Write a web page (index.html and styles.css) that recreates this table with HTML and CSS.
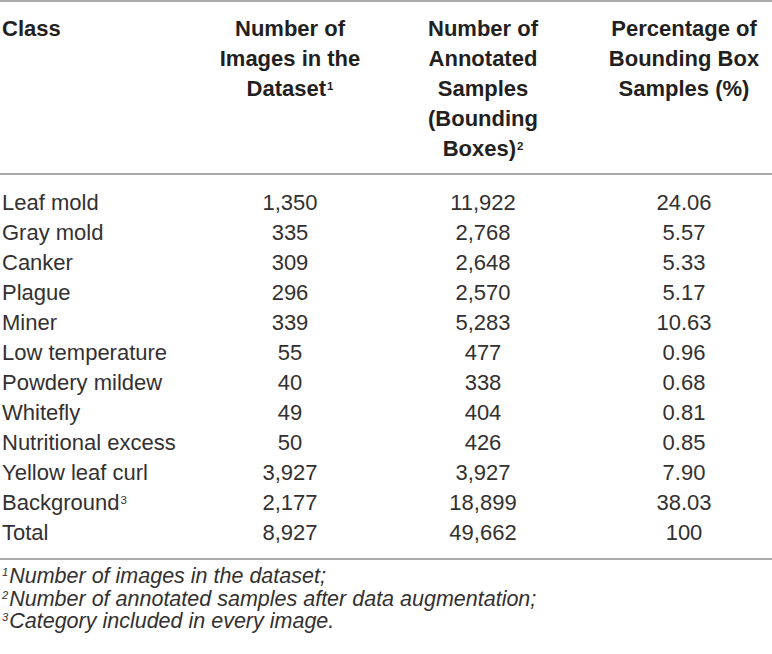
FILE: index.html
```html
<!DOCTYPE html>
<html lang="en">
<head>
<meta charset="utf-8">
<title>Dataset classes</title>
<link rel="stylesheet" href="styles.css">
</head>
<body>
<div class="wrap">
<table class="data">
  <colgroup>
    <col class="c1"><col class="c2"><col class="c3"><col class="c4">
  </colgroup>
  <thead>
    <tr>
      <th class="left">Class</th>
      <th><span class="ln">Number of</span><span class="ln">Images in the</span><span class="ln">Dataset<sup class="ref">1</sup></span></th>
      <th><span class="ln">Number of</span><span class="ln">Annotated</span><span class="ln">Samples</span><span class="ln">(Bounding</span><span class="ln">Boxes)<sup class="ref">2</sup></span></th>
      <th class="last-col"><span class="ln">Percentage of</span><span class="ln">Bounding Box</span><span class="ln">Samples (%)</span></th>
    </tr>
  </thead>
  <tbody>
    <tr class="first"><td class="left">Leaf mold</td><td>1,350</td><td>11,922</td><td class="last-col">24.06</td></tr>
    <tr><td class="left">Gray mold</td><td>335</td><td>2,768</td><td class="last-col">5.57</td></tr>
    <tr><td class="left">Canker</td><td>309</td><td>2,648</td><td class="last-col">5.33</td></tr>
    <tr><td class="left">Plague</td><td>296</td><td>2,570</td><td class="last-col">5.17</td></tr>
    <tr><td class="left">Miner</td><td>339</td><td>5,283</td><td class="last-col">10.63</td></tr>
    <tr><td class="left">Low temperature</td><td>55</td><td>477</td><td class="last-col">0.96</td></tr>
    <tr><td class="left">Powdery mildew</td><td>40</td><td>338</td><td class="last-col">0.68</td></tr>
    <tr><td class="left">Whitefly</td><td>49</td><td>404</td><td class="last-col">0.81</td></tr>
    <tr><td class="left">Nutritional excess</td><td>50</td><td>426</td><td class="last-col">0.85</td></tr>
    <tr><td class="left">Yellow leaf curl</td><td>3,927</td><td>3,927</td><td class="last-col">7.90</td></tr>
    <tr><td class="left">Background<sup class="ref">3</sup></td><td>2,177</td><td>18,899</td><td class="last-col">38.03</td></tr>
    <tr class="last"><td class="left">Total</td><td>8,927</td><td>49,662</td><td class="last-col">100</td></tr>
  </tbody>
</table>
<div class="notes">
  <p><sup>1</sup>Number of images in the dataset;</p>
  <p><sup>2</sup>Number of annotated samples after data augmentation;</p>
  <p><sup>3</sup>Category included in every image.</p>
</div>
</div>
</body>
</html>
```
FILE: styles.css
```css
html, body {
  margin: 0;
  padding: 0;
  background: #ffffff;
}
body {
  font-family: "Liberation Sans", Arial, sans-serif;
  color: #231f20;
}
.wrap {
  width: 772px;
}
.data {
  width: 772px;
  table-layout: fixed;
  border-collapse: collapse;
  border-top: 2px solid #a9a9a9;
  border-bottom: 2px solid #a9a9a9;
  font-size: 22px;
}
.c1 { width: 196px; }
.c2 { width: 188px; }
.c3 { width: 198px; }
.c4 { width: 190px; }
.data th, .data td {
  padding: 0 10px;
  text-align: center;
  line-height: 30px;
}
.data th {
  font-weight: bold;
  vertical-align: top;
  padding-top: 12px;
  padding-bottom: 9px;
  border-bottom: 2px solid #a9a9a9;
}
.ln {
  display: block;
  white-space: nowrap;
}
.data td {
  font-weight: normal;
  color: #333031;
}
.data .left {
  text-align: left;
  padding-left: 2px;
}
.data .last-col {
  padding-left: 24px;
  padding-right: 10px;
}
.data tr.first td {
  padding-top: 13px;
}
.data tr.last td {
  padding-bottom: 10px;
}
sup {
  font-size: 0.52em;
  line-height: 0;
  vertical-align: 0.55em;
}
sup.ref {
  margin-left: 1px;
}
.notes {
  padding-top: 5px;
  padding-left: 2px;
}
.notes p {
  margin: 0;
  font-style: italic;
  font-size: 21.5px;
  line-height: 22.5px;
  color: #333031;
}
.notes sup {
  font-size: 0.52em;
  vertical-align: 0.6em;
  margin-right: 1px;
}
```
